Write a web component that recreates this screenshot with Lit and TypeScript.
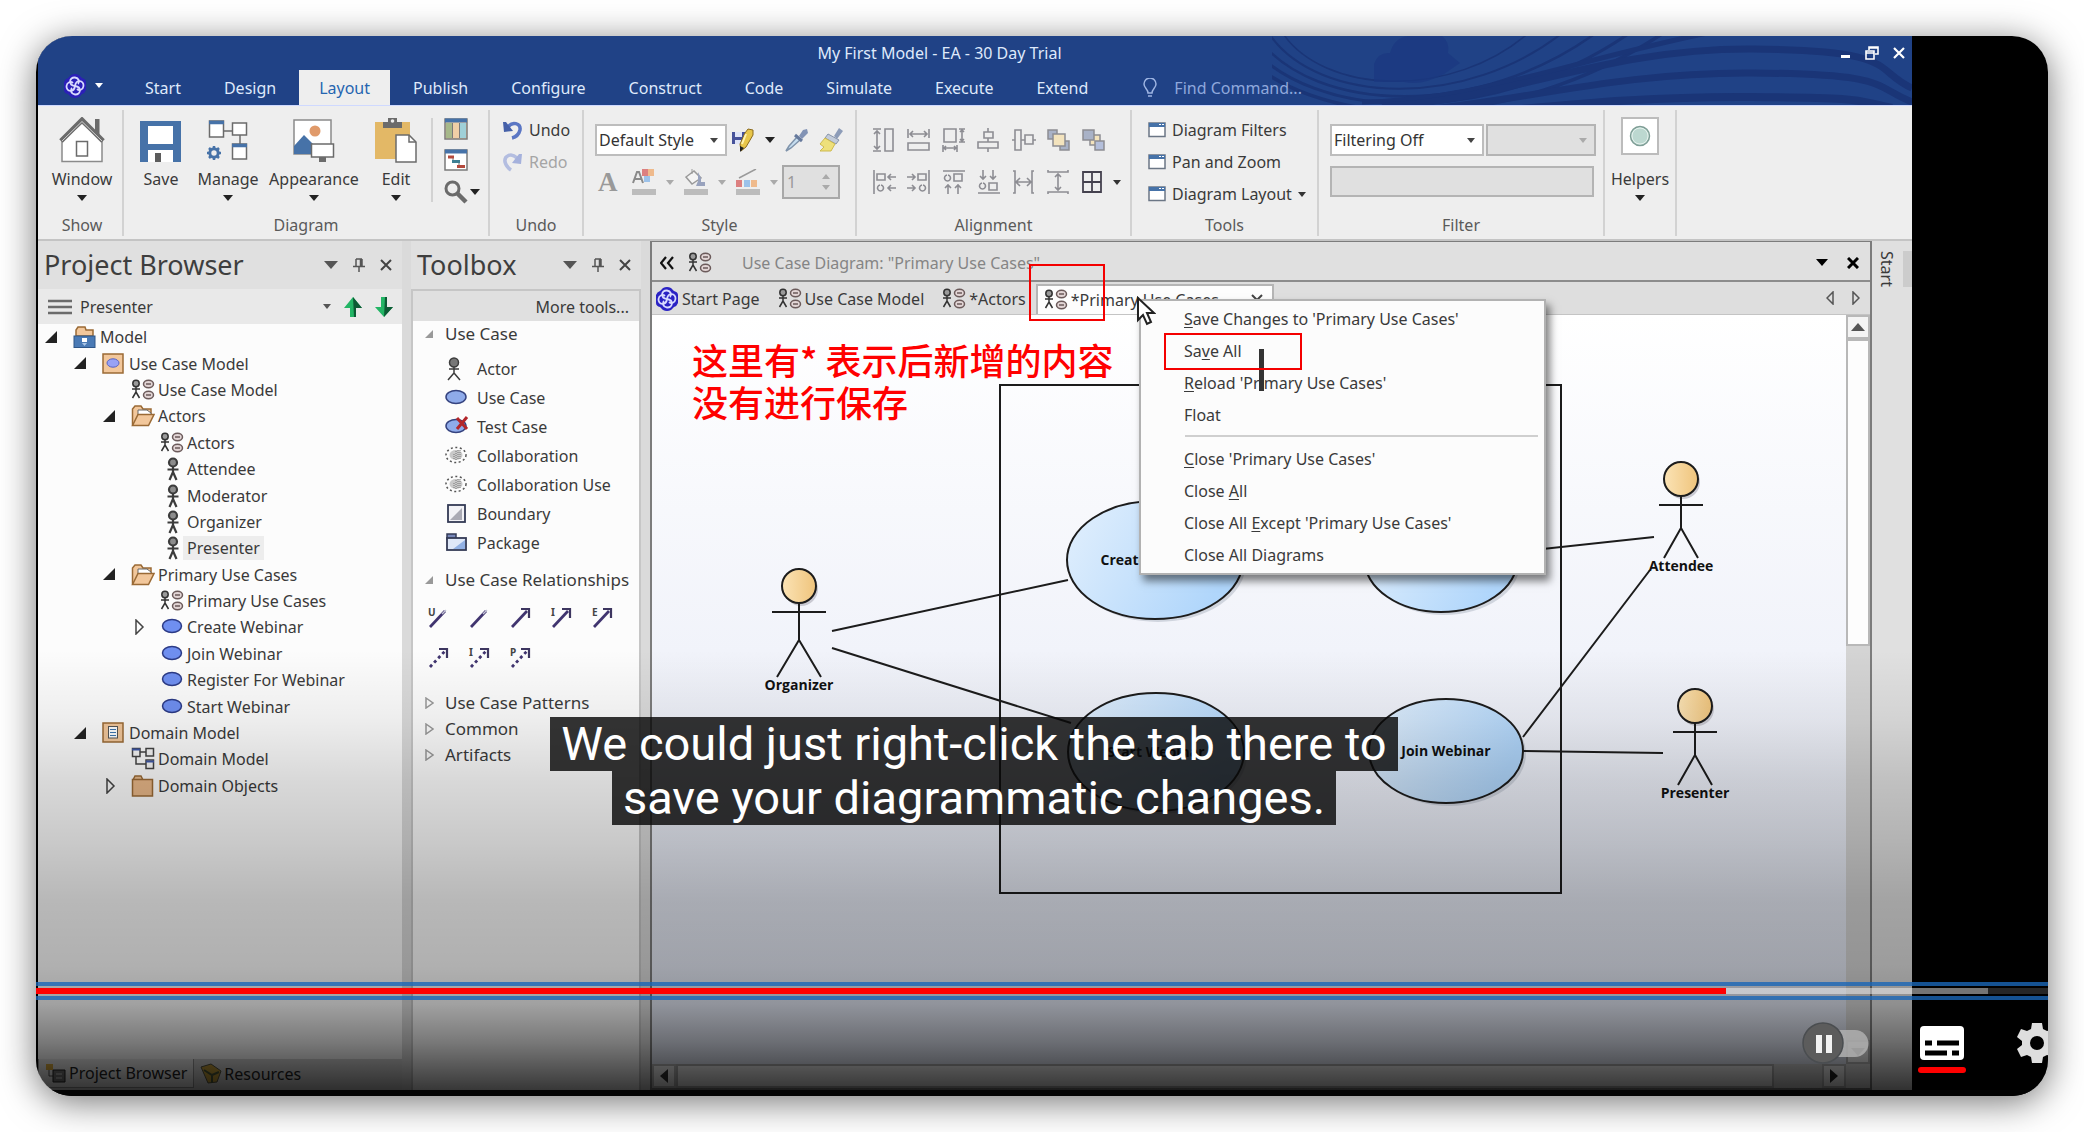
import { LitElement, html, svg, css, nothing } from "lit";
import { customElement } from "lit/decorators.js";

const ico = (w: number, h: number, body: unknown) =>
  html`<svg class="ico" width=${w} height=${h} viewBox="0 0 ${w} ${h}" aria-hidden="true">${body}</svg>`;

const down = (color = "#222") => ico(10, 6, svg`<path d="M0 0H10L5 6Z" fill=${color} />`);
const smallDown = (color = "#444") => ico(8, 5, svg`<path d="M0 0H8L4 5Z" fill=${color} />`);
const bigDown = (color = "#555") => ico(14, 8, svg`<path d="M0 0H14L7 8Z" fill=${color} />`);

const closeX = (color = "#444", w = 2) =>
  ico(12, 12, svg`<path d="M1 1L11 11M11 1L1 11" stroke=${color} stroke-width=${w} fill="none" />`);

const pin = () =>
  ico(12, 14, svg`<path d="M3 1V8M9 1V8M3 1H9M0 8.500H12M6 9V14M7.500 1V8" stroke="#555" stroke-width="1.500" fill="none" />`);

const logo = (bg: string, size = 24) =>
  html`<svg class="ico" width=${size} height=${size} viewBox="0 0 24 24" aria-hidden="true">
    <path d="M8 1Q12 -1 16 1L19 4Q23 5 23 8V16Q22 19 19 20L16 23Q12 25 8 23L5 20Q1 19 1 16V8Q2 5 5 4Z" fill=${bg} />
    <g fill="none" stroke="#d9dbff" stroke-width="1.800">
      <path d="M12 12C5 11 6 3 12 3.500C16 4 17 8 15 10" /><path d="M12 12C13 5 21 6 20.500 12C20 16 16 17 14 15" />
      <path d="M12 12C19 13 18 21 12 20.500C8 20 7 16 9 14" /><path d="M12 12C11 19 3 18 3.500 12C4 8 8 7 10 9" />
    </g></svg>`;

const ucDiagram = () =>
  ico(24, 22, svg`
    <g fill="none" stroke="#333" stroke-width="1.500">
      <circle cx="5" cy="4.500" r="3.200" fill="#9a9a9a" />
      <path d="M5 8V13M1 10H9M5 13L1.500 19M5 13L8.500 19" />
      <ellipse cx="17.500" cy="5" rx="5" ry="3.700" fill="#e2d5d5" stroke="#6b5a5a" />
      <ellipse cx="17.500" cy="16" rx="5" ry="3.700" fill="#e2d5d5" stroke="#6b5a5a" />
      <path d="M15 5H20M15 16H20" stroke="#6b5a5a" />
    </g>`);

const actorIcon = () =>
  ico(24, 24, svg`
    <g fill="none" stroke="#3c3c3c" stroke-width="2.200">
      <circle cx="13" cy="5.500" r="4" fill="#8c8c8c" />
      <path d="M13 10V16M7.500 12.500H18.500M13 15L9.500 23M13 15L16.500 23" />
    </g>`);

const ovalIcon = () =>
  ico(24, 20, svg`<ellipse cx="12" cy="9" rx="9.500" ry="6.500" fill="#6f8ff0" stroke="#2b3a86" stroke-width="1.500" />`);

const folderOpen = () =>
  ico(24, 22, svg`
    <path d="M1.500 20.500V4L4 1H10L12 4H20V9" fill="#f2c79b" stroke="#9a6a35" stroke-width="1.500" />
    <path d="M7 10V5H16L20 8V11" fill="#fff" stroke="#666" />
    <path d="M1.500 20.500L7 9.500H23L17.500 20.500Z" fill="#f2c79b" stroke="#9a6a35" stroke-width="1.500" />`);

const folderShut = () =>
  ico(24, 22, svg`
    <path d="M2 5L4 1H10L12 5" fill="#e8bd90" stroke="#9a6a35" stroke-width="1.500" />
    <rect x="1.500" y="4.500" width="20" height="16.500" fill="#e8b788" stroke="#9a6a35" stroke-width="1.500" />`);

const modelIcon = () =>
  ico(24, 22, svg`
    <path d="M3 10V4L5 1H12L13 4H20V10Z" fill="#f2c79b" stroke="#9a6a35" stroke-width="1.500" />
    <rect x="1" y="10" width="21" height="11.500" fill="#4a7ab5" stroke="#2e5688" />
    <rect x="9" y="12" width="5" height="4" fill="#fff" /><path d="M9 17H14L11.500 20Z" fill="#a9c5e6" />`);

const boxIcon = (inner: unknown) =>
  ico(24, 22, svg`<rect x="1" y="1" width="20" height="19" fill="#f2c79b" stroke="#9a6a35" stroke-width="1.500" />${inner}`);
const ucPackage = () => boxIcon(svg`<ellipse cx="11" cy="10" rx="6" ry="4.200" fill="#98a2f5" stroke="#5a64c0" />`);
const domPackage = () =>
  boxIcon(svg`<rect x="6.500" y="4.500" width="9" height="11.500" fill="#fff" stroke="#555" /><path d="M8 7.500H14M8 10.500H14M8 13.500H14" stroke="#3f77b0" />`);

const classDiagram = () =>
  ico(24, 24, svg`
    <g fill="#f7f7f7" stroke="#444" stroke-width="1.500">
      <path d="M9 5H15M5 9V17H15" fill="none" />
      <rect x="1.500" y="1.500" width="7.500" height="8" /><rect x="15" y="1.500" width="7.500" height="7.500" />
      <rect x="15" y="13" width="7.500" height="8.500" />
    </g><path d="M1 2.500H9M15 14.500H23" stroke="#3f58a8" stroke-width="2" />`);

/* ---------- ribbon pictures ---------- */
const house = () =>
  ico(46, 46, svg`
    <rect x="36" y="2" width="4.500" height="20" fill="#6b6b6b" />
    <path d="M3 24V44.500H43V24L23 6Z" fill="#fff" stroke="#8a8a8a" stroke-width="1.500" />
    <path d="M2 24L23 3L44 24" fill="none" stroke="#6b6b6b" stroke-width="5" />
    <path d="M3 24L23 4.500L43 24" fill="none" stroke="#cfcfcf" stroke-width="1" />
    <rect x="17.500" y="24.500" width="11" height="14.500" fill="#fff" stroke="#6b6b6b" stroke-width="1.500" />`);

const floppy = () =>
  ico(42, 46, svg`
    <rect x="0" y="4" width="41" height="41" fill="#4672a8" />
    <rect x="8" y="9" width="25" height="18" fill="#fff" />
    <rect x="8" y="33" width="25" height="12" fill="#fff" /><rect x="15" y="36" width="6" height="9" fill="#5c5c5c" />`);

const manage = () =>
  ico(42, 46, svg`
    <g fill="#fff" stroke="#6b6b6b" stroke-width="1.500">
      <path d="M16 14H26M33 18V28" fill="none" />
      <rect x="2.500" y="4" width="14" height="16" /><rect x="25.500" y="6" width="14" height="12" />
      <rect x="25.500" y="27" width="14" height="15" />
    </g>
    <path d="M2 5.500H17M25 28.500H40" stroke="#4672a8" stroke-width="3.500" />
    <circle cx="7" cy="36" r="4.200" fill="none" stroke="#4672a8" stroke-width="3" />
    <path d="M7 29V32M7 40V43M0 36H3M11 36H14M2 31L4 33M10 39L12 41M12 31L10 33M4 39L2 41" stroke="#4672a8" stroke-width="2.500" />`);

const appearance = () =>
  ico(42, 46, svg`
    <rect x="1" y="3" width="37" height="34" fill="#fff" stroke="#8a8a8a" stroke-width="1.500" />
    <path d="M1 37V29L11 18L22 29V37Z" fill="#4672a8" /><circle cx="22" cy="14" r="5.500" fill="#e09a6a" />
    <rect x="18.500" y="27" width="22" height="13" fill="#fff" stroke="#6b6b6b" stroke-width="1.500" />
    <rect x="26" y="40" width="7" height="5" fill="#6b6b6b" />`);

const clipboard = () =>
  ico(42, 46, svg`
    <rect x="0" y="5" width="35" height="37" fill="#e3b866" />
    <path d="M8 5H13V1H22V5H27V11H8Z" fill="#6b6b6b" /><circle cx="17.500" cy="4" r="1.800" fill="#eee" />
    <path d="M21 18H34L41 25V45H21Z" fill="#fff" stroke="#6b6b6b" stroke-width="1.500" />
    <path d="M34 18V25H41" fill="none" stroke="#6b6b6b" stroke-width="1.500" />`);

const columns = () =>
  ico(24, 22, svg`
    <rect x="1" y="1" width="22" height="20" fill="#f0cfa6" stroke="#7a7a7a" stroke-width="1.500" />
    <rect x="2" y="5" width="6" height="15" fill="#a6b88a" /><rect x="16" y="5" width="6" height="15" fill="#9fd0d8" />
    <path d="M8.500 5V20M15.500 5V20" stroke="#7a7a7a" /><path d="M1 2.500H23" stroke="#4672a8" stroke-width="4" />`);
const gantt = () =>
  ico(24, 22, svg`
    <rect x="1" y="1" width="22" height="20" fill="#fff" stroke="#7a7a7a" stroke-width="1.500" />
    <path d="M1 2.500H23" stroke="#4672a8" stroke-width="4" />
    <path d="M9 8V12M15 12V17M6 8H9" stroke="#777" /><rect x="4" y="6.500" width="6" height="3" fill="#b4493c" />
    <rect x="8" y="11" width="8" height="3" fill="#3e7f93" /><rect x="13" y="16" width="8" height="3" fill="#b4493c" />`);
const magnifier = () =>
  ico(24, 24, svg`<circle cx="8.500" cy="8.500" r="6.500" fill="none" stroke="#6b6b6b" stroke-width="3" /><path d="M13 13L22 22" stroke="#6b6b6b" stroke-width="4.500" />`);

const undoIcon = () =>
  ico(20, 20, svg`<path d="M5 7C9 1 18 3 17 10C16 14 13 17 9 18" fill="none" stroke="#5a76c4" stroke-width="3.500" /><path d="M0 2L3 2L10 11L1 12Z" fill="#4560a8" />`);
const redoIcon = () =>
  ico(20, 20, svg`<path d="M14 6C8 0 1 4 2 10C3 14 5 16 8 18" fill="none" stroke="#b3bde0" stroke-width="3.500" /><path d="M19 2H16L9 11L18 12Z" fill="#a5b1dc" />`);

const windowIcon = () =>
  ico(18, 16, svg`<rect x="1" y="1" width="16" height="13.500" fill="#fff" stroke="#6b7685" stroke-width="1.500" /><path d="M1 3H17" stroke="#4672a8" stroke-width="4" /><path d="M11 2.500H13M14 2.500H16" stroke="#fff" />`);

const stylePencil = () =>
  ico(24, 24, svg`
    <rect x="1" y="4" width="13" height="12" fill="#46529a" /><rect x="4" y="4" width="7" height="5" fill="#dfe4f7" /><rect x="4" y="12" width="6" height="4" fill="#dfe4f7" />
    <path d="M14 5L17 1L22 2V7L15 19L10 23L9 16Z" fill="#e8c64a" stroke="#8a6a1d" /><path d="M15 6L11 16" stroke="#fff3ae" stroke-width="2" /><path d="M9 18L13 20L9 24Z" fill="#222" />`);
const dropper = () =>
  ico(24, 24, svg`<path d="M12 9L4 18L1 23L6 20L15 12" fill="#c6def0" stroke="#8094ab" stroke-width="1.500" /><path d="M10 7L17 13" stroke="#66799c" stroke-width="3" /><path d="M14 8L18 2L22 1L23 5L17 11Z" fill="#8293b5" />`);
const brush = () =>
  ico(24, 24, svg`<path d="M15 8L20 0L24 3L18 11Z" fill="#8d9cb8" /><path d="M9 6L20 12L17 16L6 10Z" fill="#c3ccda" stroke="#8895aa" /><path d="M6 10L16 16L12 23H1L5 19L1 16Z" fill="#eee07a" stroke="#cdb94e" />`);

const letterColor = () =>
  ico(24, 26, svg`<rect x="10" y="0" width="6" height="7" fill="#dc8080" /><rect x="16" y="0" width="6" height="7" fill="#efba8c" /><rect x="12" y="7" width="6" height="6" fill="#9cc2ea" /><path d="M1 14L5 3H7L11 14M3 10H9" fill="none" stroke="#8a8a8a" stroke-width="2" /><rect x="0" y="20" width="24" height="6" fill="#bcbcbc" />`);
const bucket = () =>
  ico(24, 26, svg`<path d="M2 8L10 2L17 9L8 15Z" fill="#f4f4f4" stroke="#9a9a9a" stroke-width="1.500" /><path d="M8 5V0" stroke="#9a9a9a" /><path d="M14 3L17 9V13H21V17H12L14 12Z" fill="#98a2bd" /><rect x="0" y="20" width="24" height="6" fill="#bcbcbc" />`);
const lineColor = () =>
  ico(24, 26, svg`<path d="M3 9L20 0" stroke="#9a9a9a" stroke-width="1.500" /><rect x="0" y="11" width="6" height="7" fill="#dc8080" /><rect x="8" y="11" width="6" height="7" fill="#9cc2ea" /><rect x="15" y="11" width="6" height="7" fill="#efba8c" /><rect x="0" y="20" width="24" height="6" fill="#bcbcbc" />`);

const al = (d: string) => ico(24, 24, svg`<path d=${d} fill="none" stroke="#8d8d93" stroke-width="1.600" />`);
const alignTop = [
  al("M1 1H9M1 23H9M5 3V21M2 6L5 3L8 6M2 18L5 21L8 18M13 1H21V23H13Z"),
  al("M1 1V10M22 1V10M3 6H20M6 3L3 6L6 9M17 3L20 6L17 9M1 15H22V22H1Z"),
  al("M2 1H14V14H2ZM17 1H23M17 14H23M20 2V13M18 4L20 2L22 4M18 11L20 13L22 11M1 17V24M15 17V24M2 20H14M4 18L2 20L4 22M12 18L14 20L12 22"),
  al("M11 0V4M7 4H16V10H7ZM11 10V14M1 14H21V20H1ZM11 20V24"),
  al("M0 12H3M3 2H9V22H3ZM9 12H13M13 7H21V16H13ZM21 12H24"),
];
const stackFront = () =>
  ico(24, 24, svg`<g stroke="#8d8d93" stroke-width="1.500"><rect x="1" y="2" width="9" height="9" fill="#a9b2c7" /><rect x="13" y="13" width="9" height="9" fill="#a9b2c7" /><rect x="6" y="6" width="12" height="12" fill="#f3e3bd" /></g>`);
const stackBack = () =>
  ico(24, 24, svg`<g stroke="#8d8d93" stroke-width="1.500"><rect x="8" y="7" width="10" height="10" fill="#f3e3bd" /><rect x="1" y="2" width="11" height="10" fill="#a9b2c7" /><rect x="13" y="13" width="9" height="9" fill="#b4bfdb" /></g>`);
const alignBottom = [
  al("M2 0V24M5 4H13V10H5ZM24 7H16M19 4L16 7L19 10M24 18H16M19 15L16 18L19 21M8 15A3 3 0 1 0 9 15"),
  al("M22 0V24M11 4H19V10H11ZM0 7H8M5 4L8 7L5 10M0 18H8M5 15L8 18L5 21M15 15A3 3 0 1 0 16 15"),
  al("M1 1H23M12 4H20V11H12ZM5 5A3 3 0 1 0 6 5M6 24V15M3 18L6 15L9 18M16 24V15M13 18L16 15L19 18"),
  al("M1 23H23M12 13H20V20H12ZM5 13A3 3 0 1 0 6 13M6 0V9M3 6L6 9L9 6M16 0V9M13 6L16 9L19 6"),
  al("M1 1H3V23H1M22 1H20V23H22M4 12H19M8 8L4 12L8 16M15 8L19 12L15 16"),
  al("M1 0V2H21V0M1 24V22H21V24M11 4V20M8 7L11 4L14 7M8 17L11 20L14 17"),
];
const grid = () => ico(20, 22, svg`<path d="M1 1H19V21H1ZM10 1V21M1 11H19" fill="none" stroke="#44414e" stroke-width="1.800" />`);

/* ---------- toolbox pictures ---------- */
const tbActor = () =>
  ico(22, 24, svg`<g fill="none" stroke="#3c3c3c" stroke-width="1.500"><circle cx="9" cy="5.500" r="4.500" fill="#777" /><path d="M9 10V17M4 12H14M9 16L3 23M9 16L15 23" /></g>`);
const tbOval = (cross: boolean) =>
  ico(24, 22, svg`<ellipse cx="11" cy="10" rx="10" ry="6.500" fill="#8fabea" stroke="#35437f" stroke-width="1.500" />
    ${cross ? svg`<path d="M12 2L22 13M22 1L12 13" stroke="#b3262a" stroke-width="3" />` : nothing}`);
const tbCollab = () =>
  ico(24, 22, svg`
    <ellipse cx="11" cy="10" rx="10" ry="7.500" fill="none" stroke="#555" stroke-width="1.500" stroke-dasharray="2 2.500" />
    <ellipse cx="11" cy="10" rx="6.500" ry="5" fill="#c9c9c9" />
    <path d="M15 5V15M13 5V15M11 6V15M9 9V14" stroke="#777" stroke-width="1" stroke-dasharray="1 1" />`);
const tbBoundary = () =>
  ico(22, 20, svg`<rect x="3" y="1" width="17" height="17" fill="#f2f2f6" stroke="#333a55" stroke-width="1.800" /><path d="M17 4V16H5Z" fill="#aaaab4" />`);
const tbPackage = () =>
  ico(24, 20, svg`<rect x="2" y="1" width="9" height="5" fill="#7686b8" stroke="#333a55" stroke-width="1.500" /><rect x="2" y="5" width="19" height="12" fill="#dfe8f8" stroke="#333a55" stroke-width="1.800" /><path d="M20 7V16H8Z" fill="#92b1e4" />`);

const rel = (letter: string, head: number, dash: boolean) =>
  ico(26, 24, svg`
    ${letter ? svg`<text x="3" y="10" font-size="10" font-weight="700" fill="#444">${letter}</text>` : nothing}
    <path d="M5 21L20 5" stroke="#40346f" stroke-width="2.800" stroke-dasharray=${dash ? "3 3" : "none"} fill="none" />
    ${head ? svg`<path d="M14 3H22V12" fill="none" stroke="#3d3660" stroke-width="2.200" />` : svg`<path d="M17 8L21 4" stroke="#c5c5d8" stroke-width="1.500" />`}`);

type Row = [number, string, () => unknown, ("open" | "shut")?];
const TREE: Row[] = [
  [0, "Model", modelIcon, "open"],
  [1, "Use Case Model", ucPackage, "open"],
  [2, "Use Case Model", ucDiagram],
  [2, "Actors", folderOpen, "open"],
  [3, "Actors", ucDiagram],
  [3, "Attendee", actorIcon],
  [3, "Moderator", actorIcon],
  [3, "Organizer", actorIcon],
  [3, "Presenter", actorIcon],
  [2, "Primary Use Cases", folderOpen, "open"],
  [3, "Primary Use Cases", ucDiagram],
  [3, "Create Webinar", ovalIcon, "shut"],
  [3, "Join Webinar", ovalIcon],
  [3, "Register For Webinar", ovalIcon],
  [3, "Start Webinar", ovalIcon],
  [1, "Domain Model", domPackage, "open"],
  [2, "Domain Model", classDiagram],
  [2, "Domain Objects", folderShut, "shut"],
];

const TABS = ["Start", "Design", "Layout", "Publish", "Configure", "Construct", "Code", "Simulate", "Execute", "Extend"];

const figure = (cx: number, cy: number, arm: number, trunk: number, leg: number, label: string, labelY: number) => svg`
  <ellipse cx=${cx + 2} cy=${cy + 3} rx="17" ry="17" fill="#c9c9d2" />
  <ellipse cx=${cx} cy=${cy} rx="17" ry="17" fill="url(#skin)" class="ink" />
  <path class="ink" d="M${cx} ${cy + 17}V${cy + trunk}M${cx - arm} ${cy + 26}H${cx + arm}M${cx} ${cy + trunk}L${cx - arm + 5} ${cy + leg}M${cx} ${cy + trunk}L${cx + arm - 5} ${cy + leg}" />
  <text class="name" x=${cx} y=${labelY} text-anchor="middle">${label}</text>`;

const useCase = (cx: number, cy: number, rx: number, ry: number, label: string) => svg`
  <ellipse cx=${cx + 3} cy=${cy + 3} rx=${rx} ry=${ry} fill="#b9bfcc" opacity=".6" />
  <ellipse cx=${cx} cy=${cy} rx=${rx} ry=${ry} fill="url(#sky)" class="ink" />
  <text class="name" x=${cx} y=${cy + 5} text-anchor="middle">${label}</text>`;

@customElement("app-root")
export class AppRoot extends LitElement {
  static styles = css`
    :host { display: block; box-sizing: border-box; min-height: 100vh; padding: 36px; background: #fff; overflow: hidden;
      font-family: "Noto Sans", "Open Sans", sans-serif; font-size: 16px; line-height: 24px; color: #3a3a3a; }
    * { box-sizing: border-box; }
    button, select, input { font: inherit; color: inherit; margin: 0; padding: 0; border: 0; background: none; border-radius: 0; }
    ul { list-style: none; margin: 0; padding: 0; }
    .ico { display: block; flex: none; }
    .shadow { border-radius: 36px; box-shadow: 0 6px 36px rgba(0, 0, 0, 0.55); }
    .player { position: relative; display: flex; flex-direction: column; min-height: calc(100vh - 72px); border-radius: 36px;
      overflow: hidden; background: #000; }
    .video { flex: 1; display: flex; padding: 0 136px 0 2px; border-bottom: 6px solid #111; }
    .app { flex: 1; min-width: 0; display: flex; flex-direction: column; background: #dadada; }

    .titlebar { position: relative; background: #204286; color: #dfe9fb; }
    .waves { position: absolute; right: 0; top: 0; }
    .caption-row { position: relative; display: grid; grid-template-columns: 1fr auto; align-items: center; height: 34px; }
    .caption-row h1 { margin: 0; font-size: 16px; font-weight: 400; text-align: center; }
    .winctl { display: flex; gap: 14px; padding-right: 7px; }
    .tabrow { position: relative; display: flex; align-items: stretch; height: 35px; padding-left: 25px; }
    .logo-btn { display: flex; align-items: center; gap: 8px; width: 62px; padding-bottom: 4px; }
    .tabs { display: flex; gap: 3px; }
    .tab { padding: 0 20px; }
    .tab.on { background: #eee; color: #2565b0; }
    .find { display: flex; align-items: center; gap: 17px; margin-left: 35px; }
    .find input { width: 160px; color: #8fa8dc; }
    .find input::placeholder { color: #8fa8dc; opacity: 1; }

    .ribbon { display: flex; height: 136px; padding: 4px 0 3px; background: #eee; border-top: 1px solid #cfd9ff; border-bottom: 2px solid #c4c4c4; }
    .group { display: flex; flex-direction: column; border-right: 2px solid #d2d2d2; }
    .group h2 { margin: 0; font-size: 16px; font-weight: 400; text-align: center; line-height: 22px; color: #5a5a5a; }
    .tools { height: 104px; display: flex; }
    .g-show { width: 86px; } .g-diagram { width: 366px; } .g-undo { width: 94px; } .g-style { width: 273px; }
    .g-align { width: 275px; } .g-tools { width: 187px; } .g-filter { width: 286px; } .g-help { width: 72px; }
    .g-show .tools, .g-show h2 { padding-left: 4px; }
    .g-style .tools { padding-left: 11px; } .g-align .tools { padding-left: 15px; }
    .g-filter .tools { padding-left: 11px; } .g-diagram .tools { padding-left: 4px; }
    .g-undo .tools { padding-left: 13px; } .g-tools .tools { padding-left: 16px; }
    .big { display: flex; flex-direction: column; align-items: center; padding-top: 7px; flex: 1; }
    .big .txt { line-height: 32px; }
    .g-diagram .big { flex: none; }
    .w1 { width: 66px; } .w2 { width: 68px; } .w3 { width: 104px; } .w4 { width: 60px; }
    .mini { display: flex; flex-direction: column; gap: 9px; height: 84px; margin: 8px 0 0 5px; padding-left: 11px; border-left: 2px solid #d2d2d2; }
    .mini span { display: flex; align-items: center; gap: 2px; }
    .col { display: flex; flex-direction: column; padding-top: 4px; }
    .line { display: flex; align-items: center; gap: 6px; height: 32px; white-space: nowrap; }
    .off { color: #a5a5a5; }
    .rows { display: flex; flex-direction: column; gap: 10px; padding-top: 14px; }
    .row { display: flex; align-items: center; height: 32px; }
    .g-align .row { gap: 11px; }
    .pick { display: inline-grid; align-items: center; justify-items: end; height: 32px; border: 2px solid #bdbdbd; background: #fff; color: #333; }
    .pick select { grid-area: 1 / 1; appearance: none; width: 100%; height: 100%; padding-left: 2px; opacity: 1; }
    .pick .ico { grid-area: 1 / 1; margin-right: 7px; pointer-events: none; }
    .pick.dis, .field { background: #e0e0e0; border: 2px solid #b4b4b4; }
    .style-pick { width: 132px; margin-right: 4px; } .filter-pick { width: 154px; margin-right: 2px; } .dis-pick { width: 110px; }
    .field { width: 264px; height: 31px; }
    .gap { width: 10px; } .ga { margin: 0 10px; } .ga.last { margin-right: 4px; }
    .fontA { width: 20px; font-family: "Liberation Serif", serif; font-weight: 700; font-size: 27px; color: #999; margin: 0 14px 0 3px; }
    .spin { display: flex; align-items: center; justify-content: space-between; width: 58px; height: 34px; border: 2px solid #a8a8a8; background: #e0e0e0; color: #999; padding: 0 8px 0 3px; }
    .spin input { width: 24px; color: #999; }
    .helper { display: grid; place-items: center; width: 38px; height: 38px; margin-bottom: 8px; border: 2px solid #bcbcbc; background: #fff; }

    .body { flex: 1; display: flex; min-height: 0; }
    .panel { display: flex; flex-direction: column; }
    .browser { width: 364px; margin-right: 9px; }
    .toolbox { width: 230px; margin-right: 9px; }
    .phead { display: flex; align-items: center; height: 48px; padding: 0 10px 0 6px; background: #e0e0e0; color: #555; }
    .phead h2 { flex: 1; margin: 0; font-size: 27px; font-weight: 400; line-height: 40px; color: #3e3e3e; }
    .pctl { display: flex; align-items: center; gap: 15px; }
    .context { display: flex; align-items: center; height: 35px; padding: 0 9px 0 10px; gap: 8px; background: #e9e9e9; }
    .context span { flex: 1; }
    .context .arrows { display: flex; align-items: center; gap: 13px; }
    .tree { display: grid; grid-auto-rows: 1fr; height: 475px; }
    .treebox { flex: 1; background: #fcfcfc; }
    .node { display: flex; align-items: center; white-space: nowrap; }
    .d0 { padding-left: 7px; } .d1 { padding-left: 36px; } .d2 { padding-left: 65px; } .d3 { padding-left: 94px; }
    .tw { width: 28px; flex: none; }
    .node .lbl { padding: 0 4px; margin-left: -1px; }
    .node .sel { background: #ededed; }
    .btabs { display: flex; height: 31px; padding-bottom: 2px; background: #d6d6d6; color: #222; }
    .btabs button { display: flex; align-items: center; gap: 2px; padding: 0 6px; }
    .btabs .cur { background: #ececec; border: 1px solid #999; border-top: 0; }

    .tlist { flex: 1; border: 2px solid #c6c6c6; border-bottom: 0; background: #fcfcfc; overflow: hidden; white-space: nowrap; }
    .more { height: 30px; padding-right: 10px; text-align: right; line-height: 32px; background: #e0e0e0; }
    .thead { display: flex; align-items: center; gap: 11px; height: 26px; padding-left: 12px; width: 100%; text-align: left; font-size: 17px; }
    .titems { padding: 7px 0 10px 32px; }
    .titems li { display: flex; align-items: center; gap: 8px; height: 29px; }
    .titems .box { width: 24px; }
    .rels { display: flex; flex-wrap: wrap; gap: 16px 15px; padding: 13px 0 20px 12px; }

    .doc { position: relative; flex: 1; min-width: 0; display: flex; flex-direction: column; border: 2px solid #7c7c7c; border-top-width: 1px; }
    .dhead { display: flex; align-items: center; height: 40px; padding: 3px 11px 0 8px; background: #e0e0e0; border-bottom: 2px solid #8c8c8c; color: #858585; }
    .dhead .dt { flex: 1; margin-left: 30px; }
    .dhead .ctl { display: flex; align-items: center; gap: 19px; }
    .chev { margin-right: 14px; }
    .dtabs { display: flex; align-items: flex-end; height: 33px; padding: 0 10px 0 3px; background: #dedede; border-bottom: 1px solid #c4c4c4; }
    .dtab { display: flex; align-items: center; gap: 3px; height: 30px; white-space: nowrap; margin-right: 18px; }
    .dtab.wide { margin-right: 10px; }
    .dtab.cur { width: 238px; margin: 0; padding: 0 9px 0 6px; background: #fdfdfd; border: 2px solid #b5b5b5; border-bottom: 0; }
    .dtab.cur span { flex: 1; text-align: left; }
    .dnav { margin-left: auto; display: flex; gap: 18px; align-self: center; }
    .work { flex: 1; display: grid; grid-template-columns: 1fr 24px; grid-template-rows: 1fr 24px; }
    .canvas { position: relative; background: linear-gradient(#fff, #f1f3fa 45%, #e0e5f2); overflow: hidden; }
    .canvas svg { position: absolute; left: 0; top: 0; width: 100%; height: 100%; }
    .ink { stroke: #1c1c1c; stroke-width: 2; }
    path.ink { fill: none; }
    .name { font-family: "Open Sans", sans-serif; font-size: 14px; font-weight: 700; fill: #111; }
    .vbar { display: flex; flex-direction: column; background: #d4d4d4; }
    .hbar { display: flex; background: #d4d4d4; }
    .sb { display: grid; place-items: center; width: 24px; height: 24px; background: #f4f4f4; border: 2px solid #b8b8b8; }
    .vthumb { height: 307px; background: #fdfdfd; border: 2px solid #b8b8b8; }
    .hthumb { width: 92%; background: #f2f2f2; border: 2px solid #b0b0b0; }
    .push { margin-top: auto; } .pushx { margin-left: auto; }
    .side { width: 40px; display: flex; justify-content: space-between; padding-top: 10px; background: #e0e0e0; }
    .side span { writing-mode: vertical-rl; line-height: 29px; }
    .side i { width: 9px; height: 36px; background: #ccc; }

    .menu { position: absolute; left: 487px; top: 57px; width: 407px; padding: 2px 6px 2px 0; background: #fcfcfc; border: 2px solid #b2b2b2;
      box-shadow: 4px 6px 8px rgba(0, 0, 0, 0.5); z-index: 1; }
    .menu button { display: block; width: 100%; height: 32px; padding-left: 43px; text-align: left; }
    .menu u { text-underline-offset: 2px; }
    .menu hr { height: 2px; margin: 4px 0 6px 44px; border: 0; background: #cfcfcf; }
    .mark { position: absolute; border: 2px solid #f40000; z-index: 2; }
    .mark-tab { left: 377px; top: 22px; width: 76px; height: 57px; }
    .mark-save { left: 512px; top: 91px; width: 138px; height: 37px; }
    .ibeam { position: absolute; left: 607px; top: 107px; width: 5px; height: 42px; background: #333; z-index: 2; }
    .cursor { position: absolute; left: 484px; top: 54px; z-index: 2; }
    .note { position: absolute; left: 40px; top: 96px; margin: 0; color: #f00; font-family: "Noto Sans CJK SC", sans-serif; font-size: 36px; font-weight: 500; line-height: 42px; }

    .shade { position: absolute; inset: 0; z-index: 3; pointer-events: none;
      background: linear-gradient(to top, rgba(0,0,0,.78) 6px, rgba(0,0,0,.52) 54px, rgba(0,0,0,.36) 92px, rgba(0,0,0,.3) 130px, rgba(0,0,0,.27) 196px, rgba(0,0,0,.2) 256px, rgba(0,0,0,.14) 316px, rgba(0,0,0,.06) 376px, transparent 446px); }
    .subs { position: absolute; left: 0; right: 136px; bottom: 271px; z-index: 4; display: flex; flex-direction: column; align-items: center;
      font-family: Roboto, sans-serif; font-size: 47px; line-height: 54px; color: #fff; white-space: nowrap; }
    .subs span { padding: 0 11px; background: rgba(8, 8, 8, 0.82); }
    .seek { position: absolute; left: 0; right: 0; bottom: 96px; z-index: 4; display: flex; height: 18px; padding: 2px 0; border: solid rgba(26, 103, 183, 0.8); border-width: 4px 0; }
    .seek input { appearance: none; display: block; width: 100%; height: 6px;
      background: linear-gradient(to right, #f00 84%, rgba(255,255,255,.46) 84%, rgba(255,255,255,.46) 97%, rgba(255,255,255,.15) 97%); }
    .seek input::-webkit-slider-thumb { appearance: none; width: 0; height: 6px; }
    .controls { position: absolute; right: -10px; bottom: 18px; z-index: 4; display: flex; align-items: flex-start; }
    .auto { margin-right: 49px; }
    .cc { margin: 4px 50px 0 0; }
  `;

  private big(icon: unknown, label: string, cls: string, arrow = true) {
    return html`<button class="big ${cls}">${icon}<span class="txt">${label}</span>${arrow ? down() : nothing}</button>`;
  }

  private titlebar() {
    return html`<header class="titlebar">
      <svg class="waves" width="640" height="69" viewBox="0 0 640 69" aria-hidden="true">
        <g fill="none" stroke="#1a3577">
          ${[0, 1, 2, 3, 4].map((i) => svg`<path stroke-width=${1.5 + i / 2} d="M${10 - i * 12} ${-4 + i * 3}C${50 - i * 4} ${58 + i * 10} ${180 + i * 14} ${66 + i * 9} ${260 + i * 34} -6" />`)}
          <path stroke-width="5" d="M90 66C210 64 290 26 450 -6" />
          <path stroke-width="7" d="M110 70C230 66 330 12 480 13S600 34 640 52" />
          <path stroke-width="7" d="M130 76C240 68 340 36 480 37S600 50 640 66" />
          <path stroke-width="8" d="M170 80C270 72 360 60 480 61S580 64 620 72" />
        </g>
        <path d="M102 46V28Q106 16 118 17Q122 2 136 0H170Q178 6 176 17L188 27L172 38Q150 50 132 46Z" fill="#1b3880" opacity=".75" />
      </svg>
      <div class="caption-row">
        <h1>My First Model - EA - 30 Day Trial</h1>
        <div class="winctl">
          <button aria-label="Minimize">${ico(10, 14, svg`<rect y="9" width="9" height="3" fill="#fff" />`)}</button>
          <button aria-label="Restore">${ico(14, 14, svg`<path d="M4 4V1H13V8H10M1 5H9V13H1ZM1 7H9M4 2H13" fill="none" stroke="#fff" stroke-width="1.600" />`)}</button>
          <button aria-label="Close">${ico(12, 14, svg`<path d="M1 2L11 12M11 2L1 12" stroke="#fff" stroke-width="2.200" />`)}</button>
        </div>
      </div>
      <div class="tabrow">
        <button class="logo-btn" aria-label="Application menu">${logo("#2b1fb8")}${ico(8, 6, svg`<path d="M0 0H8L4 5Z" fill="#fff" />`)}</button>
        <nav class="tabs">${TABS.map((t) => html`<button class="tab ${t === "Layout" ? "on" : ""}">${t}</button>`)}</nav>
        <label class="find">
          ${ico(14, 20, svg`<path d="M5 15C5 11 1 10 1 6A6 6 0 0 1 13 6C13 10 9 11 9 15ZM5 18H9" fill="none" stroke="#9db4e2" stroke-width="1.500" />`)}
          <input type="text" placeholder="Find Command..." aria-label="Find Command" />
        </label>
      </div>
    </header>`;
  }

  private ribbon() {
    return html`<section class="ribbon">
      <div class="group g-show"><div class="tools">${this.big(house(), "Window", "")}</div><h2>Show</h2></div>
      <div class="group g-diagram">
        <div class="tools">
          ${this.big(floppy(), "Save", "w1", false)} ${this.big(manage(), "Manage", "w2")}
          ${this.big(appearance(), "Appearance", "w3")} ${this.big(clipboard(), "Edit", "w4")}
          <div class="mini"><span>${columns()}</span><span>${gantt()}</span><span>${magnifier()}${down()}</span></div>
        </div>
        <h2>Diagram</h2>
      </div>
      <div class="group g-undo">
        <div class="tools col"><button class="line">${undoIcon()}Undo</button><button class="line off" disabled>${redoIcon()}Redo</button></div>
        <h2>Undo</h2>
      </div>
      <div class="group g-style">
        <div class="tools rows">
          <div class="row">
            <span class="pick style-pick"><select aria-label="Style"><option>Default Style</option></select>${smallDown()}</span>
            ${stylePencil()}<span class="ga">${down()}</span>${dropper()}<span class="gap"></span>${brush()}
          </div>
          <div class="row">
            <span class="fontA">A</span>${letterColor()}<span class="ga">${smallDown("#aaa")}</span>
            ${bucket()}<span class="ga">${smallDown("#aaa")}</span>
            ${lineColor()}<span class="ga last">${smallDown("#aaa")}</span>
            <span class="spin"><input type="text" value="1" disabled aria-label="Line width" />${ico(8, 16, svg`<path d="M0 5L4 0L8 5ZM0 11H8L4 16Z" fill="#aaa" />`)}</span>
          </div>
        </div>
        <h2>Style</h2>
      </div>
      <div class="group g-align">
        <div class="tools rows">
          <div class="row">${alignTop}${stackFront()}${stackBack()}</div>
          <div class="row">${alignBottom}${grid()}${smallDown("#333")}</div>
        </div>
        <h2>Alignment</h2>
      </div>
      <div class="group g-tools">
        <div class="tools col">
          <button class="line">${windowIcon()}Diagram Filters</button>
          <button class="line">${windowIcon()}Pan and Zoom</button>
          <button class="line">${windowIcon()}Diagram Layout${smallDown("#333")}</button>
        </div>
        <h2>Tools</h2>
      </div>
      <div class="group g-filter">
        <div class="tools rows">
          <div class="row">
            <span class="pick filter-pick"><select aria-label="Filtering"><option>Filtering Off</option></select>${smallDown()}</span>
            <span class="pick dis dis-pick"><select disabled aria-label="Filter set"></select>${smallDown("#aaa")}</span>
          </div>
          <input class="field" type="text" disabled aria-label="Filter text" />
        </div>
        <h2>Filter</h2>
      </div>
      <div class="group g-help">
        <div class="tools">${this.big(html`<span class="helper">${ico(22, 22, svg`<circle cx="11" cy="11" r="9.500" fill="#bcd8d0" stroke="#7f9e96" stroke-width="1.500" /><circle cx="11" cy="11" r="8" fill="none" stroke="#e6f2ee" />`)}</span>`, "Helpers", "")}</div>
      </div>
    </section>`;
  }

  private phead(title: string) {
    return html`<div class="phead"><h2>${title}</h2>
      <div class="pctl"><button aria-label="Options">${bigDown()}</button><button aria-label="Pin">${pin()}</button><button aria-label="Close">${closeX()}</button></div>
    </div>`;
  }

  private browser() {
    return html`<section class="panel browser">
      ${this.phead("Project Browser")}
      <div class="context">
        ${ico(24, 16, svg`<path d="M0 2H24M0 8H24M0 14H24" stroke="#6b6b6b" stroke-width="2.500" />`)}
        <span>Presenter</span>
        <div class="arrows">
          ${smallDown("#555")}
          ${ico(18, 22, svg`<path d="M9 1L18 12H12V21H6V12H0Z" fill="#23b565" /><path d="M9 1L18 12H12V21H10Z" fill="#0c5a34" />`)}
          ${ico(18, 22, svg`<path d="M9 21L18 11H12V1H6V11H0Z" fill="#23b565" /><path d="M9 21L18 11H12V1H10Z" fill="#0c5a34" />`)}
        </div>
      </div>
      <div class="treebox">
        <ul class="tree" role="tree">
          ${TREE.map(([d, t, icon, state], i) => html`<li class="node d${d}" role="treeitem">
            <span class="tw">${state === "open"
              ? ico(13, 13, svg`<path d="M12 0V12H0Z" fill="#222" />`)
              : state === "shut" ? ico(14, 16, svg`<path d="M4 1L11 8L4 15Z" fill="none" stroke="#444" stroke-width="1.500" />`) : nothing}</span>
            ${icon()}<span class="lbl ${i === 8 ? "sel" : ""}">${t}</span></li>`)}
        </ul>
      </div>
      <div class="btabs">
        <button class="cur">${ico(22, 22, svg`<path d="M1 2H8V8H1Z" fill="#e0b040" /><path d="M4 8V14H8" stroke="#555" fill="none" /><path d="M8 8H20V20H8Z" fill="#777" stroke="#222" /><path d="M11 12H17M11 16H17" stroke="#ddd" />`)}Project Browser</button>
        <button>${ico(22, 22, svg`<path d="M1 4L11 1L21 8L17 19L8 20Z" fill="#c9a23a" stroke="#554" /><path d="M4 7L12 12L19 9M12 12V20" fill="none" stroke="#4d5a3a" stroke-width="2" />`)}Resources</button>
      </div>
    </section>`;
  }

  private thead(label: string, open: boolean) {
    return html`<button class="thead">${open
      ? ico(9, 9, svg`<path d="M8 0V8H0Z" fill="#999" />`)
      : ico(9, 12, svg`<path d="M1 1L8 6L1 11Z" fill="none" stroke="#999" stroke-width="1.500" />`)}${label}</button>`;
  }

  private toolbox() {
    const items: [string, unknown][] = [
      ["Actor", tbActor()], ["Use Case", tbOval(false)], ["Test Case", tbOval(true)], ["Collaboration", tbCollab()],
      ["Collaboration Use", tbCollab()], ["Boundary", tbBoundary()], ["Package", tbPackage()],
    ];
    return html`<section class="panel toolbox">
      ${this.phead("Toolbox")}
      <div class="tlist">
        <div class="more">More tools...</div>
        ${this.thead("Use Case", true)}
        <ul class="titems">${items.map(([t, i]) => html`<li><span class="box">${i}</span>${t}</li>`)}</ul>
        ${this.thead("Use Case Relationships", true)}
        <div class="rels">${rel("U", 0, false)}${rel("", 0, false)}${rel("", 1, false)}${rel("I", 1, false)}${rel("E", 1, false)}
          ${rel("", 1, true)}${rel("I", 1, true)}${rel("P", 1, true)}</div>
        ${this.thead("Use Case Patterns", false)}${this.thead("Common", false)}${this.thead("Artifacts", false)}
      </div>
    </section>`;
  }

  private diagram() {
    return html`<svg role="img" aria-label="Primary Use Cases diagram">
      <defs>
        <linearGradient id="skin"><stop offset="0" stop-color="#fbe3b5" /><stop offset="1" stop-color="#efc47c" /></linearGradient>
        <linearGradient id="sky" x1="0" y1="0" x2="1" y2=".4"><stop offset="0" stop-color="#e3f0fd" /><stop offset="1" stop-color="#b0d6fb" /></linearGradient>
      </defs>
      <rect class="ink" x="348" y="70" width="561" height="508" fill="none" />
      ${useCase(503, 245, 88, 59, "Create Webinar")} ${useCase(789, 245, 76, 52, "Register For Webinar")}
      ${useCase(504, 437, 88, 59, "Start Webinar")} ${useCase(794, 436, 77, 52, "Join Webinar")}
      <path class="ink" d="M180 316L416 265M180 333L419 408M871 236L1002 222M871 422L998 255M871 436L1011 438" />
      ${figure(147, 271, 27, 54, 91, "Organizer", 375)} ${figure(1029, 164, 22, 49, 79, "Attendee", 256)} ${figure(1043, 391, 22, 49, 79, "Presenter", 483)}
    </svg>`;
  }

  private doc() {
    return html`<main class="doc">
      <div class="dhead">
        <button class="chev" aria-label="Collapse">${ico(14, 14, svg`<path d="M6 1L1 7L6 13M13 1L8 7L13 13" fill="none" stroke="#111" stroke-width="2.200" />`)}</button>
        ${ucDiagram()}<span class="dt">Use Case Diagram: "Primary Use Cases"</span>
        <div class="ctl"><button aria-label="List">${ico(12, 7, svg`<path d="M0 0H12L6 7Z" fill="#000" />`)}</button><button aria-label="Close">${closeX("#000", 3)}</button></div>
      </div>
      <div class="dtabs">
        <button class="dtab">${logo("#2a22c4")}Start Page</button>
        <button class="dtab">${ucDiagram()}Use Case Model</button>
        <button class="dtab wide">${ucDiagram()}*Actors</button>
        <button class="dtab cur">${ucDiagram()}<span>*Primary Use Cases</span>${closeX()}</button>
        <div class="dnav">
          <button aria-label="Scroll left">${ico(8, 14, svg`<path d="M7 1V13L1 7Z" fill="none" stroke="#555" stroke-width="1.500" />`)}</button>
          <button aria-label="Scroll right">${ico(8, 14, svg`<path d="M1 1V13L7 7Z" fill="none" stroke="#555" stroke-width="1.500" />`)}</button>
        </div>
      </div>
      <div class="work">
        <div class="canvas">${this.diagram()}</div>
        <div class="vbar"><span class="sb">${ico(14, 8, svg`<path d="M0 8L7 0L14 8Z" fill="#555" />`)}</span><span class="vthumb"></span><span class="sb push">${bigDown()}</span></div>
        <div class="hbar"><span class="sb">${ico(8, 14, svg`<path d="M8 0V14L0 7Z" fill="#333" />`)}</span><span class="hthumb"></span><span class="sb pushx">${ico(8, 14, svg`<path d="M0 0V14L8 7Z" fill="#222" />`)}</span></div>
      </div>
      <p class="note">这里有* 表示后新增的内容<br />没有进行保存</p>
      <div class="menu" role="menu">
        <button role="menuitem"><u>S</u>ave Changes to 'Primary Use Cases'</button>
        <button role="menuitem">Sa<u>v</u>e All</button>
        <button role="menuitem"><u>R</u>eload 'Primary Use Cases'</button>
        <button role="menuitem">Float</button>
        <hr />
        <button role="menuitem"><u>C</u>lose 'Primary Use Cases'</button>
        <button role="menuitem">Close <u>A</u>ll</button>
        <button role="menuitem">Close All <u>E</u>xcept 'Primary Use Cases'</button>
        <button role="menuitem">Close All Diagrams</button>
      </div>
      <div class="ibeam"></div>
      <div class="mark mark-tab"></div>
      <div class="mark mark-save"></div>
      <svg class="cursor" width="20" height="30" viewBox="0 0 20 30" aria-hidden="true"><path d="M2 2V24L7 19L11 28L15 26L11 17H18Z" fill="#fff" stroke="#222" stroke-width="2" /></svg>
    </main>`;
  }

  render() {
    return html`<div class="shadow"><div class="player">
      <div class="video">
        <div class="app">
          ${this.titlebar()} ${this.ribbon()}
          <div class="body">${this.browser()} ${this.toolbox()} ${this.doc()}<aside class="side"><span>Start</span><i></i></aside></div>
        </div>
      </div>
      <div class="shade"></div>
      <div class="subs"><span>We could just right-click the tab there to</span><span>save your diagrammatic changes.</span></div>
      <div class="seek"><input type="range" min="0" max="100" value="84" aria-label="Seek" /></div>
      <div class="controls">
        <button class="auto" aria-label="Autoplay">${ico(67, 42, svg`<path d="M26 8H53A13.500 13.500 0 0 1 53 35H26Z" fill="#b0b0b0" opacity=".85" /><circle cx="21" cy="21" r="20" fill="#5c5c5c" stroke="#4a4d50" stroke-width="1.500" /><path d="M14 13H20V31H14ZM24 13H30V31H24Z" fill="#f2f2f2" />`)}</button>
        <button class="cc" aria-label="Subtitles">${ico(48, 52, svg`<rect x="2" y="0" width="44" height="34" rx="4" fill="#fff" /><path d="M7 17H14M19 17H41M7 27H29M34 27H41" stroke="#000" stroke-width="5" /><rect x="0" y="41" width="48" height="6" rx="3" fill="#f00" />`)}</button>
        <button aria-label="Settings">${ico(42, 42, svg`<path fill-rule="evenodd" fill="#dedede" d="M16 1H26L27 7L31 9L37 7L41 15L36 19V23L41 27L37 35L31 33L27 35L26 41H16L15 35L11 33L5 35L1 27L6 23V19L1 15L5 7L11 9L15 7ZM21 14A7 7 0 1 0 21 28A7 7 0 1 0 21 14Z" />`)}</button>
      </div>
    </div></div>`;
  }
}
